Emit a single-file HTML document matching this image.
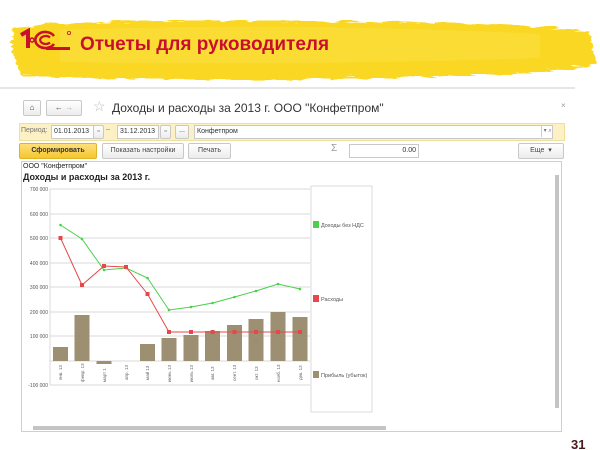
<!DOCTYPE html>
<html><head><meta charset="utf-8"><style>
body{margin:0;width:600px;height:450px;background:#fff;position:relative;overflow:hidden;font-family:"Liberation Sans",sans-serif}
.a{position:absolute}
.btn{position:absolute;border:1px solid #c8c8c8;border-radius:2px;background:linear-gradient(#fff,#ececec);font-size:7px;color:#444;text-align:center;line-height:14px;height:14px}
.fld{position:absolute;border:1px solid #c9c9c9;background:#fff;font-size:7px;color:#333;line-height:12px;height:12px;padding-left:2px;box-sizing:content-box}
</style></head><body>
<svg class="a" style="left:0;top:0" width="600" height="90">
<defs><filter id="r"><feTurbulence baseFrequency="0.03 0.25" numOctaves="2" seed="5"/><feDisplacementMap in="SourceGraphic" scale="7"/></filter></defs>
<path filter="url(#r)" d="M12 26 Q120 16 300 20 Q480 18 588 30 L594 62 Q560 72 400 76 Q200 80 20 74 L10 50 Z" fill="#fad722"/>
<path d="M60 30 Q300 22 540 34 L540 58 Q300 66 60 62Z" fill="#fce45a" opacity=".35"/>
<line x1="0" y1="88" x2="575" y2="88" stroke="#ccc"/>
</svg>
<svg class="a" style="left:18px;top:28px" width="56" height="24" viewBox="0 0 56 24">
<path d="M3 7 L10 3 L10 20" stroke="#c8102e" stroke-width="4" fill="none"/>
<path d="M36 8 A10 8 0 1 0 36 16" stroke="#c8102e" stroke-width="2.6" fill="none"/>
<path d="M32 9.5 A5.5 4 0 1 0 32 14.5" stroke="#c8102e" stroke-width="2.2" fill="none"/>
<path d="M16 12 A2 2 0 1 0 16 12.1" stroke="#c8102e" stroke-width="1.5" fill="none"/>
<rect x="28" y="19" width="24" height="3" fill="#c8102e"/><circle cx="51" cy="5" r="1.6" fill="none" stroke="#c8102e" stroke-width=".8"/>
</svg>
<div class="a" style="left:80px;top:34px;font-size:19px;font-weight:bold;color:#c8102e">Отчеты для руководителя</div>

<div class="btn" style="left:23px;top:100px;width:16px;font-size:8px">⌂</div>
<div class="btn" style="left:46px;top:100px;width:34px;font-size:8px">← <span style="color:#aaa">→</span></div>
<div class="a" style="left:93px;top:98px;font-size:14px;color:#bbb">☆</div>
<div class="a" style="left:112px;top:101px;font-size:12px;color:#333">Доходы и расходы за 2013 г. ООО "Конфетпром"</div>
<div class="a" style="left:561px;top:101px;font-size:8px;color:#999">×</div>

<div class="a" style="left:19px;top:123px;width:546px;height:18px;background:#fbf1c4;border:1px solid #efe09a;box-sizing:border-box"></div>
<div class="a" style="left:21px;top:127px;font-size:7px;color:#777">Период:</div>
<div class="fld" style="left:51px;top:125px;width:39px">01.01.2013</div>
<div class="btn" style="left:93px;top:125px;width:9px;height:12px;line-height:12px">▫</div>
<div class="a" style="left:106px;top:126px;font-size:7px;color:#777">–</div>
<div class="fld" style="left:117px;top:125px;width:38px">31.12.2013</div>
<div class="btn" style="left:160px;top:125px;width:9px;height:12px;line-height:12px">▫</div>
<div class="btn" style="left:175px;top:125px;width:12px;height:12px;line-height:10px">...</div>
<div class="fld" style="left:194px;top:125px;width:355px">Конфетпром</div>
<div class="a" style="left:541px;top:125px;width:20px;height:12px;border-left:1px solid #ccc;font-size:6px;color:#777;line-height:12px">&nbsp;▾ ⌕</div>

<div class="btn" style="left:19px;top:143px;width:76px;background:linear-gradient(#fde07a,#f5c62e);border-color:#e0b42a;color:#333;font-weight:bold">Сформировать</div>
<div class="btn" style="left:102px;top:143px;width:80px">Показать настройки</div>
<div class="btn" style="left:188px;top:143px;width:41px">Печать</div>
<div class="a" style="left:331px;top:143px;font-size:10px;color:#999">Σ</div>
<div class="fld" style="left:349px;top:144px;width:64px;text-align:right;padding-right:2px">0.00</div>
<div class="btn" style="left:518px;top:143px;width:44px">Еще &nbsp;▾</div>

<div class="a" style="left:21px;top:161px;width:541px;height:271px;border:1px solid #cfcfcf;box-sizing:border-box"></div>
<div class="a" style="left:23px;top:163px;font-size:7px;color:#222">ООО "Конфетпром"</div>
<div class="a" style="left:23px;top:172px;font-size:9px;font-weight:bold;color:#222">Доходы и расходы за 2013 г.</div>
<div class="a" style="left:555px;top:175px;width:4px;height:233px;background:#c4c4c4"></div>
<div class="a" style="left:33px;top:426px;width:353px;height:4px;background:#c4c4c4"></div>

<svg class="a" style="left:0;top:0" width="600" height="450" font-family="Liberation Sans" font-size="5" fill="#555">
<g stroke="#ccc" stroke-width="0.7">
<line x1="50" y1="189" x2="310" y2="189"/><line x1="50" y1="214" x2="310" y2="214"/><line x1="50" y1="238" x2="310" y2="238"/><line x1="50" y1="263" x2="310" y2="263"/><line x1="50" y1="287" x2="310" y2="287"/><line x1="50" y1="312" x2="310" y2="312"/><line x1="50" y1="336" x2="310" y2="336"/><line x1="50" y1="361" x2="310" y2="361"/><line x1="50" y1="385" x2="310" y2="385"/><line x1="50" y1="189" x2="50" y2="385"/>
</g>
<g text-anchor="end"><text x="48" y="191">700 000</text><text x="48" y="216">600 000</text><text x="48" y="240">500 000</text><text x="48" y="265">400 000</text><text x="48" y="289">300 000</text><text x="48" y="314">200 000</text><text x="48" y="338">100 000</text><text x="48" y="387">-100 000</text></g>
<g fill="#9c8f72">
<rect x="53" y="347" width="15" height="14"/><rect x="74.5" y="315" width="15" height="46"/><rect x="96.5" y="361" width="15" height="3"/><rect x="140" y="344" width="15" height="17"/><rect x="161.5" y="338" width="15" height="23"/><rect x="183.5" y="335" width="15" height="26"/><rect x="205" y="331" width="15" height="30"/><rect x="227" y="325" width="15" height="36"/><rect x="248.5" y="319" width="15" height="42"/><rect x="270.5" y="312" width="15" height="49"/><rect x="292.5" y="317" width="15" height="44"/>
</g>
<polyline fill="none" stroke="#4ccf4c" stroke-width="1" points="60.5,225 82,239 104,270 126,268 147.5,278 169,310 191,307 212.6,303 234.5,297 256,291 278,284 300,289"/>
<g fill="#4ccf4c"><circle cx="60.5" cy="225" r="1.3"/><circle cx="82" cy="239" r="1.3"/><circle cx="104" cy="270" r="1.3"/><circle cx="126" cy="268" r="1.3"/><circle cx="147.5" cy="278" r="1.3"/><circle cx="169" cy="310" r="1.3"/><circle cx="191" cy="307" r="1.3"/><circle cx="212.6" cy="303" r="1.3"/><circle cx="234.5" cy="297" r="1.3"/><circle cx="256" cy="291" r="1.3"/><circle cx="278" cy="284" r="1.3"/><circle cx="300" cy="289" r="1.3"/></g>
<polyline fill="none" stroke="#e8474a" stroke-width="1" points="60.5,238 82,285 104,266 126,267 147.5,294 169,332 191,332 212.6,332 234.5,332 256,332 278,332 300,332"/>
<g fill="#e8474a"><rect x="58.5" y="236" width="4" height="4"/><rect x="80" y="283" width="4" height="4"/><rect x="102" y="264" width="4" height="4"/><rect x="124" y="265" width="4" height="4"/><rect x="145.5" y="292" width="4" height="4"/><rect x="167" y="330" width="4" height="4"/><rect x="189" y="330" width="4" height="4"/><rect x="210.6" y="330" width="4" height="4"/><rect x="232.5" y="330" width="4" height="4"/><rect x="254" y="330" width="4" height="4"/><rect x="276" y="330" width="4" height="4"/><rect x="298" y="330" width="4" height="4"/></g>
<g font-size="4.5" fill="#666">
<text transform="translate(62,380) rotate(-90)">янв. 13</text><text transform="translate(84,382) rotate(-90)">февр. 13</text><text transform="translate(106,382) rotate(-90)">март 1</text><text transform="translate(128,380) rotate(-90)">апр. 13</text><text transform="translate(149,380) rotate(-90)">май 13</text><text transform="translate(171,382) rotate(-90)">июнь 13</text><text transform="translate(193,382) rotate(-90)">июль 13</text><text transform="translate(214,380) rotate(-90)">авг. 13</text><text transform="translate(236,381) rotate(-90)">сент. 13</text><text transform="translate(258,380) rotate(-90)">окт. 13</text><text transform="translate(280,382) rotate(-90)">нояб. 13</text><text transform="translate(302,380) rotate(-90)">дек. 13</text>
</g>
<rect x="311" y="186" width="61" height="226" fill="none" stroke="#ccc" stroke-width="0.7"/>
<rect x="313" y="221" width="6" height="7" fill="#4ccf4c"/><text x="321" y="227" font-size="5.5">Доходы без НДС</text>
<rect x="313" y="295" width="6" height="7" fill="#e8474a"/><text x="321" y="301" font-size="5.5">Расходы</text>
<rect x="313" y="371" width="6" height="7" fill="#9c8f72"/><text x="321" y="377" font-size="5.5">Прибыль (убыток)</text>
<text x="571" y="449" font-size="13" font-weight="bold" fill="#4a1a1a">31</text>
</svg>
</body></html>
